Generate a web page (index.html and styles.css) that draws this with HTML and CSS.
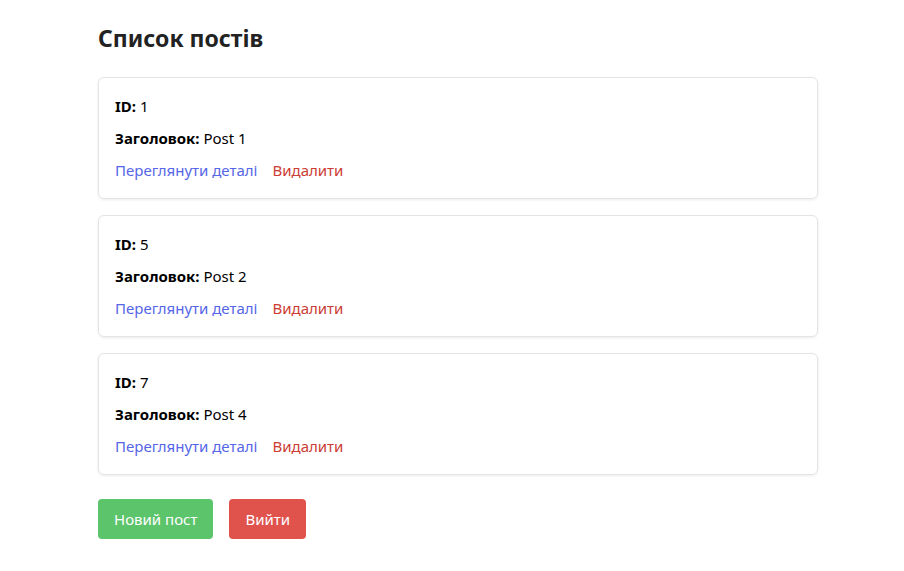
FILE: index.html
```html
<!DOCTYPE html>
<html lang="uk">
<head>
<meta charset="utf-8">
<title>Список постів</title>
<link rel="stylesheet" href="styles.css">
</head>
<body>
<main class="page">
  <h1 class="title">Список постів</h1>
  <div class="list">
    <div class="card">
      <div class="row"><b>ID:</b> 1</div>
      <div class="row"><b>Заголовок:</b> Post 1</div>
      <div class="row links"><a class="link view" href="#">Переглянути деталі</a><a class="link del" href="#">Видалити</a></div>
    </div>
    <div class="card">
      <div class="row"><b>ID:</b> 5</div>
      <div class="row"><b>Заголовок:</b> Post 2</div>
      <div class="row links"><a class="link view" href="#">Переглянути деталі</a><a class="link del" href="#">Видалити</a></div>
    </div>
    <div class="card">
      <div class="row"><b>ID:</b> 7</div>
      <div class="row"><b>Заголовок:</b> Post 4</div>
      <div class="row links"><a class="link view" href="#">Переглянути деталі</a><a class="link del" href="#">Видалити</a></div>
    </div>
  </div>
  <div class="actions">
    <button class="btn green">Новий пост</button>
    <button class="btn red">Вийти</button>
  </div>
</main>
</body>
</html>
```
FILE: styles.css
```css
* { box-sizing: border-box; }
body {
  margin: 0;
  background: #fff;
  font-family: "Noto Sans", "Open Sans", sans-serif;
  font-size: 15px;
  color: #000;
}
.page {
  width: 720px;
  margin-left: 98px;
  padding-top: 22px;
}
.title {
  margin: 0 0 23px;
  font-size: 23px;
  line-height: 32px;
  font-weight: 700;
  color: #222;
}
.list {
  display: flex;
  flex-direction: column;
  gap: 16px;
}
.card {
  border: 1px solid #e4e4e4;
  border-radius: 6px;
  padding: 16px;
  display: flex;
  flex-direction: column;
  gap: 8px;
  box-shadow: 0 1px 3px rgba(0,0,0,0.08);
}
.row { line-height: 24px; height: 24px; }
.links { display: flex; gap: 15px; }
.link { text-decoration: none; }
.view { color: #5566e6; }
.del { color: #cc3d35; }
.actions {
  display: flex;
  gap: 16px;
  margin-top: 24px;
}
.btn {
  border: none;
  border-radius: 4px;
  height: 40px;
  padding: 0 16px;
  font-family: inherit;
  font-size: 15px;
  color: #fff;
}
.green { background: #5cc46b; }
.red { background: #e0534d; }
```
